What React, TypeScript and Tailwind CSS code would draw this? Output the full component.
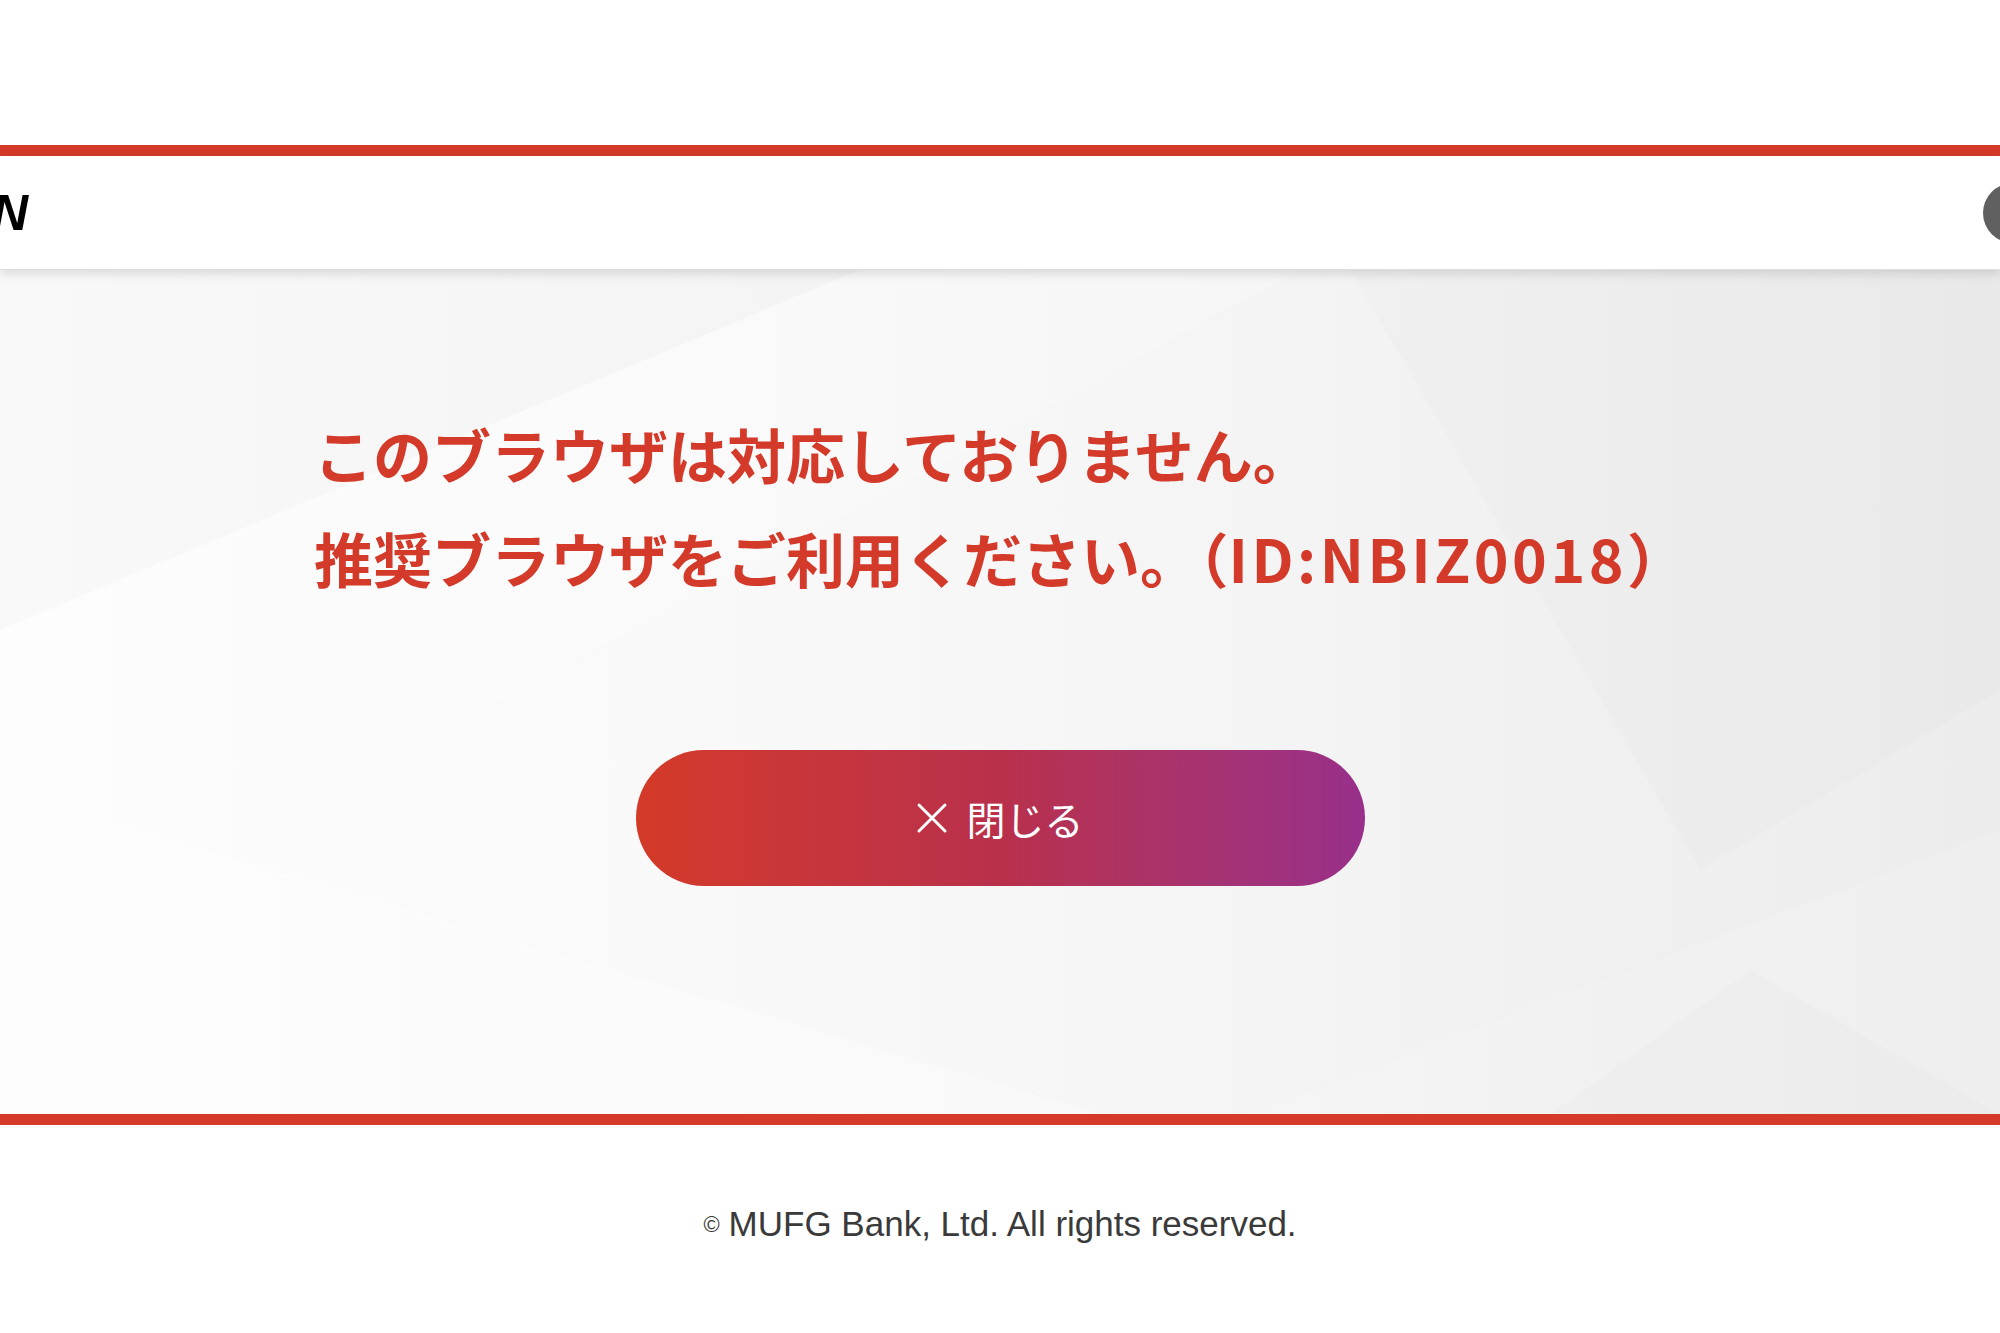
import React from 'react';

const BackgroundShapes: React.FC = () => (
  <svg
    className="absolute inset-0 h-full w-full"
    viewBox="0 0 2000 844"
    preserveAspectRatio="none"
    aria-hidden="true"
  >
    <polygon points="0,0 860,0 0,360" fill="#000" fillOpacity="0.015" />
    <polygon points="0,360 860,0 1300,0 0,700" fill="#fff" fillOpacity="0.2" />
    <polygon points="0,520 1100,844 0,844" fill="#fff" fillOpacity="0.3" />
    <polygon points="1250,844 2000,560 2000,844" fill="#fff" fillOpacity="0.12" />
    <polygon points="1350,0 2000,0 2000,420 1700,600" fill="#000" fillOpacity="0.01" />
    <polygon points="1550,844 1750,700 2000,844" fill="#000" fillOpacity="0.01" />
  </svg>
);

const CloseIcon: React.FC = () => (
  <svg width="32" height="32" viewBox="0 0 32 32" aria-hidden="true">
    <path d="M3 3 L29 29 M29 3 L3 29" stroke="#fff" strokeWidth="3" strokeLinecap="round" />
  </svg>
);

const App: React.FC = () => {
  return (
    <div className="flex min-h-[1333px] w-full flex-col overflow-hidden bg-white">
      {/* Top spacer */}
      <div className="h-[145px] bg-white" />
      <div className="h-[11px] bg-[#d43a27]" />

      {/* Header */}
      <header className="relative z-10 flex h-[114px] items-center justify-between border-b border-[#dedede] bg-white shadow-[0_4px_10px_rgba(0,0,0,0.12)]">
        <span className="-ml-[8px] font-['Liberation_Sans',sans-serif] text-[50px] font-bold italic leading-none text-black">
          N
        </span>
        <span className="-mr-[43px] h-[60px] w-[60px] rounded-full bg-[#606060]" />
      </header>

      {/* Main message */}
      <main className="relative flex h-[844px] flex-col bg-linear-to-r from-[#fdfdfd] via-[#f7f7f7] to-[#ececec]">
        <BackgroundShapes />
        <div className="relative ml-[314px] self-start whitespace-nowrap pt-[132px] font-['Noto_Sans_CJK_JP',sans-serif] text-[59px] font-bold leading-[104px] text-[#d43a2a]">
          <p>このブラウザは対応しておりません。</p>
          <p>
            推奨ブラウザをご利用ください。（<span className="tracking-[3.5px]">ID:NBIZ0018</span>）
          </p>
        </div>
        <button
          type="button"
          className="relative mx-auto mt-[140px] flex h-[136px] w-[729px] items-center justify-center gap-[18px] rounded-full bg-linear-to-r from-[#d43a27] via-[#b9304b] to-[#982f8a] font-['Noto_Sans_CJK_JP',sans-serif] text-[39px] font-normal text-white"
        >
          <CloseIcon />
          <span>閉じる</span>
        </button>
      </main>

      <div className="h-[11px] bg-[#d43a27]" />

      {/* Footer */}
      <footer className="flex h-[208px] items-center justify-center bg-white pb-[10px] font-['Liberation_Sans',sans-serif] text-[#3a3a3a]">
        <span className="mr-[9px] text-[22px]">©</span>
        <span className="text-[35px]">MUFG Bank, Ltd. All rights reserved.</span>
      </footer>
    </div>
  );
};

export default App;
